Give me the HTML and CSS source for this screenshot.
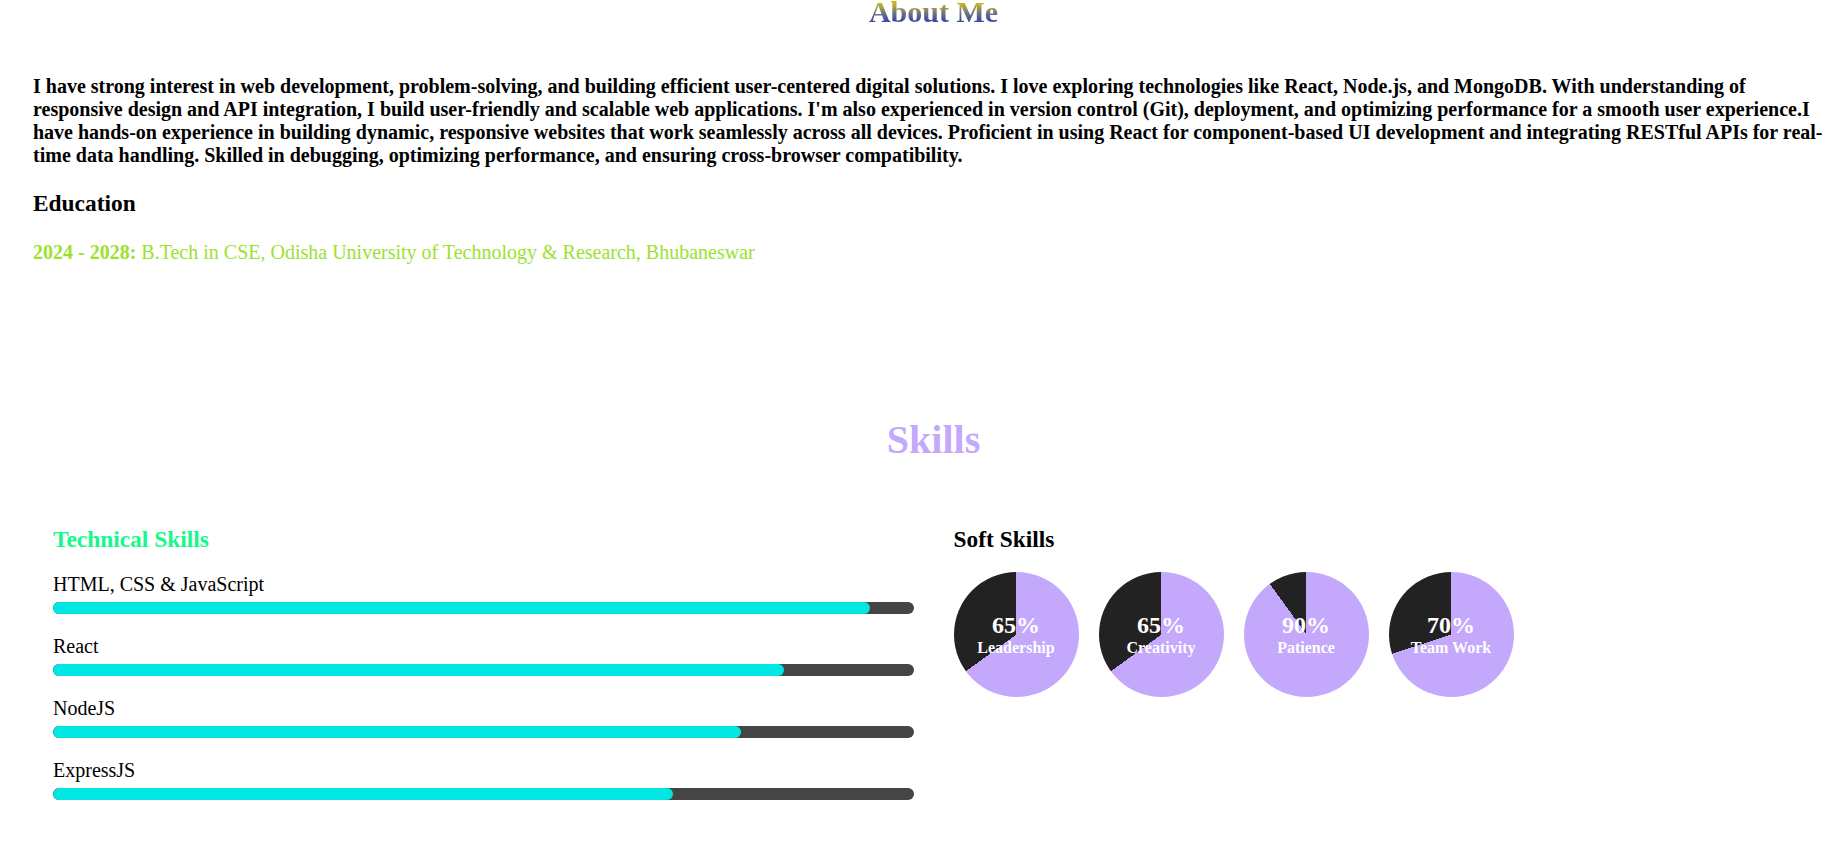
FILE: index.html
```html
<!DOCTYPE html>
<html lang="en">
<head>
<meta charset="utf-8">
<title>About Me</title>
<link rel="stylesheet" href="styles.css">
</head>
<body>
<main class="page">
  <section class="about">
    <h2 class="about-title"><span class="gradient-text">About Me</span></h2>
    <p class="about-text">I have strong interest in web development, problem-solving, and building efficient user-centered digital solutions. I love exploring technologies like React, Node.js, and MongoDB. With understanding of responsive design and API integration, I build user-friendly and scalable web applications. I'm also experienced in version control (Git), deployment, and optimizing performance for a smooth user experience.I have hands-on experience in building dynamic, responsive websites that work seamlessly across all devices. Proficient in using React for component-based UI development and integrating RESTful APIs for real-time data handling. Skilled in debugging, optimizing performance, and ensuring cross-browser compatibility.</p>
    <h3 class="edu-title">Education</h3>
    <p class="edu-item"><strong>2024 - 2028:</strong> B.Tech in CSE, Odisha University of Technology &amp; Research, Bhubaneswar</p>
  </section>

  <section class="skills">
    <h1 class="skills-title">Skills</h1>
    <div class="skills-grid">
      <div class="tech">
        <h3 class="tech-title">Technical Skills</h3>
        <div class="skill">
          <div class="skill-name">HTML, CSS &amp; JavaScript</div>
          <div class="bar"><div class="fill" style="width:95%"></div></div>
        </div>
        <div class="skill">
          <div class="skill-name">React</div>
          <div class="bar"><div class="fill" style="width:85%"></div></div>
        </div>
        <div class="skill">
          <div class="skill-name">NodeJS</div>
          <div class="bar"><div class="fill" style="width:80%"></div></div>
        </div>
        <div class="skill">
          <div class="skill-name">ExpressJS</div>
          <div class="bar"><div class="fill" style="width:72%"></div></div>
        </div>
      </div>
      <div class="soft">
        <h3 class="soft-title">Soft Skills</h3>
        <div class="pies">
          <div class="pie" style="--p:65%">
            <span class="pie-value">65%</span>
            <span class="pie-label">Leadership</span>
          </div>
          <div class="pie" style="--p:65%">
            <span class="pie-value">65%</span>
            <span class="pie-label">Creativity</span>
          </div>
          <div class="pie" style="--p:90%">
            <span class="pie-value">90%</span>
            <span class="pie-label">Patience</span>
          </div>
          <div class="pie" style="--p:70%">
            <span class="pie-value">70%</span>
            <span class="pie-label">Team Work</span>
          </div>
        </div>
      </div>
    </div>
  </section>
</main>
</body>
</html>
```
FILE: styles.css
```css
html, body {
  margin: 0;
  padding: 0;
  background: #ffffff;
}

body {
  font-family: "Liberation Serif", "Times New Roman", serif;
  font-size: 20px;
  color: #000000;
}

.page {
  padding: 0 2px 0 33px;
}

.about-title {
  font-size: 30px;
  font-weight: bold;
  text-align: center;
  margin: 0 0 51px;
  line-height: 24px;
}

.gradient-text {
  display: inline-block;
  background: linear-gradient(180deg, #cdb41c 0%, #c3b12a 18%, #7a7c78 50%, #3f519f 82%, #3a4ca2 100%);
  -webkit-background-clip: text;
  background-clip: text;
  color: transparent;
}

.about-text {
  font-weight: bold;
  margin: 0 0 23px;
  line-height: normal;
}

.edu-title {
  font-size: 23.4px;
  margin: 0 0 24px;
  line-height: normal;
}

.edu-item {
  margin: 0;
  color: #9be22d;
}

.skills {
  margin-top: 152px;
}

.skills-title {
  font-size: 40px;
  text-align: center;
  color: #c4a8fd;
  margin: 0 0 63px;
  line-height: normal;
}

.skills-grid {
  display: grid;
  grid-template-columns: 1fr 1fr;
  gap: 40px;
  padding: 0 20px;
}

.tech-title,
.soft-title {
  font-size: 23.4px;
  margin: 0 0 20px;
  line-height: normal;
}

.soft-title {
  margin-bottom: 19px;
}

.tech-title {
  color: #14f98a;
}

.skill {
  margin-bottom: 21px;
}

.skill-name {
  margin-bottom: 6px;
  line-height: normal;
}

.bar {
  height: 12px;
  background: #454545;
  border-radius: 6px;
  overflow: hidden;
}

.fill {
  height: 100%;
  background: #00e6e3;
  border-radius: 6px;
}

.pies {
  display: flex;
  gap: 20px;
}

.pie {
  width: 125px;
  height: 125px;
  border-radius: 50%;
  background: conic-gradient(#c4a8fc 0 var(--p), #222222 var(--p) 100%);
  display: flex;
  flex-direction: column;
  align-items: center;
  justify-content: center;
  color: #ffffff;
  font-weight: bold;
  text-align: center;
}

.pie-value {
  font-size: 24px;
  line-height: normal;
}

.pie-label {
  font-size: 16px;
  line-height: normal;
}
```
